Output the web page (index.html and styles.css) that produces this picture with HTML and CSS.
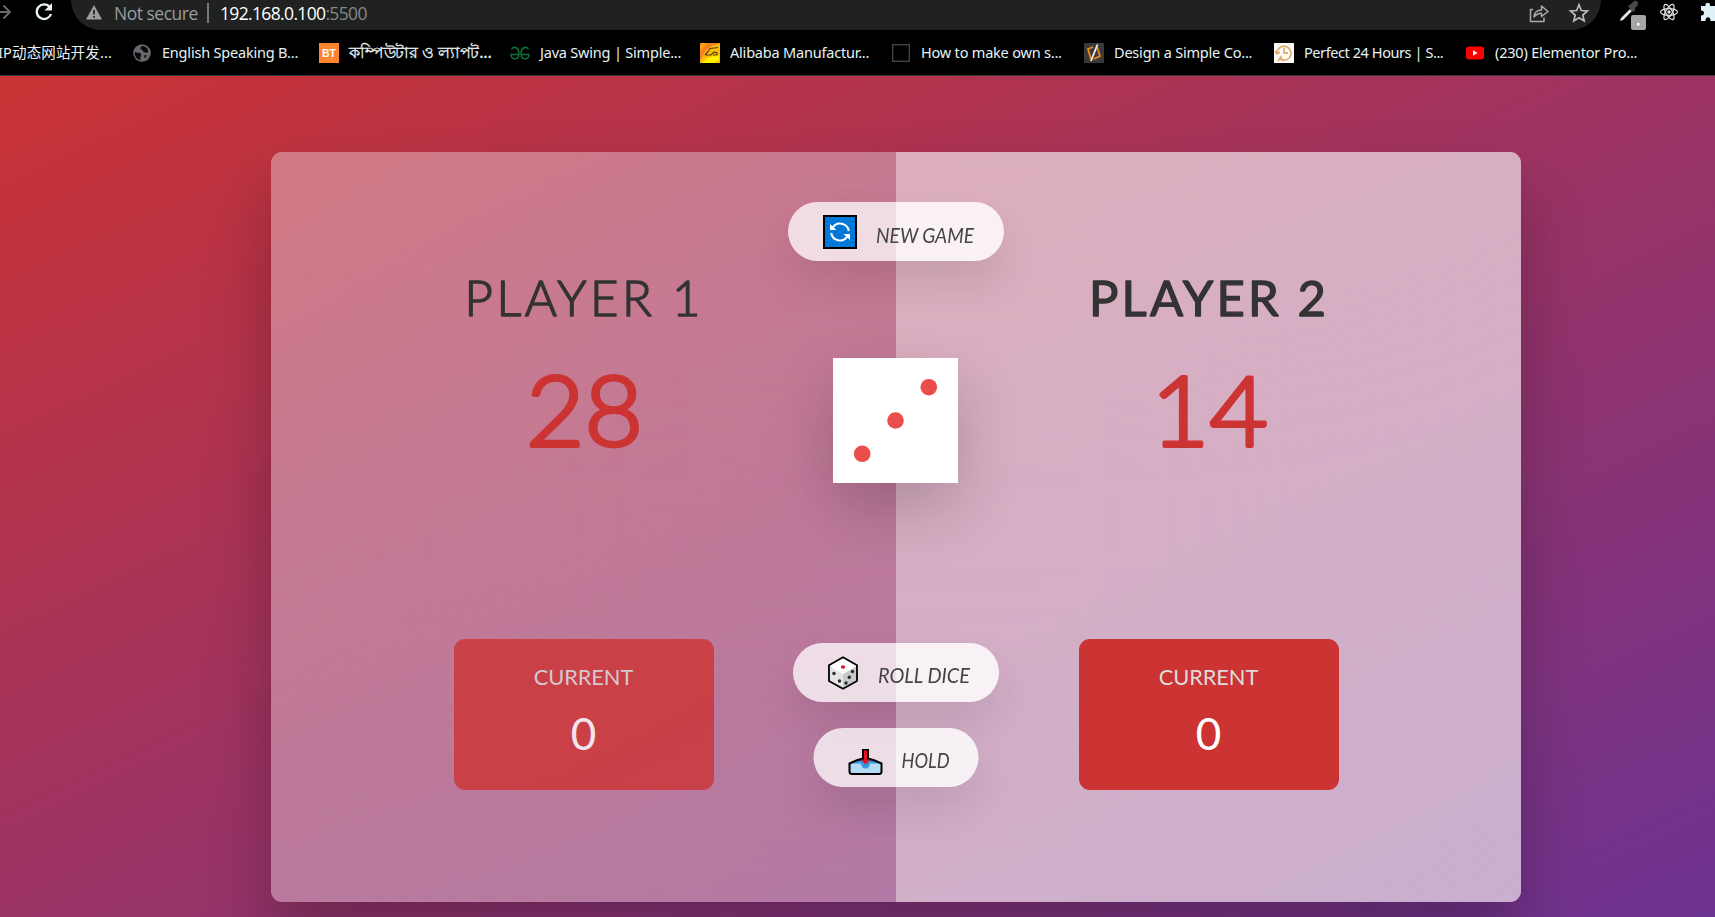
FILE: index.html
```html
<!DOCTYPE html>
<html lang="en">
<head>
<meta charset="utf-8">
<title>Pig Game</title>
<link rel="stylesheet" href="styles.css">
</head>
<body>
<header class="browser">
  <div class="toolbar">
    <svg class="forward" width="14" height="24" viewBox="0 0 14 24"><path d="M0 12H11M4.500 5.500L11 12L4.500 18.500" fill="none" stroke="#6a6b6c" stroke-width="1.800"/></svg>
    <svg class="reload" width="20" height="20" viewBox="0 0 20 20"><path d="M15.800 5.200A7.300 7.300 0 1 0 17 12" fill="none" stroke="#e8f4f6" stroke-width="2.300"/><path d="M18 1V8.500H10.500Z" fill="#e8f4f6"/></svg>
    <div class="address">
      <svg width="16" height="15" viewBox="0 0 16 15"><path d="M8 0L16 14.500H0Z" fill="#9b9da0"/><path d="M8 5V9.500M8 11V12.800" stroke="#202221" stroke-width="1.700"/></svg>
      <span class="insecure">Not secure</span>
      <span class="divider"></span>
      <span class="url">192.168.0.100<span class="port">:5500</span></span>
      <svg class="share" width="20" height="20" viewBox="0 0 20 20"><path d="M4 6.500H1.500V18.500H15V14.500M5 14C5.500 9.500 8 7 12.500 7V3L19 8.500L12.500 13.500V10.200C9 10.200 7 11.500 5 14Z" fill="none" stroke="#a9abac" stroke-width="1.500" stroke-linejoin="round"/></svg>
      <svg class="star" width="20" height="20" viewBox="0 0 20 20"><path d="M10 1.800L12.300 7.500L18.500 8L13.800 12L15.200 18L10 14.800L4.800 18L6.200 12L1.500 8L7.700 7.500Z" fill="none" stroke="#b9bbbc" stroke-width="1.700"/></svg>
    </div>
    <div class="extensions">
      <svg width="28" height="28" viewBox="0 0 28 28"><path d="M2 18L11 9L13 11L4 20L1 21Z" fill="#e4e4e4"/><path d="M9 6L12 4L14 2C17-1 21 2 18 6L16 8L16 11L13 12Z" fill="#48494a"/><rect x="12" y="15" width="15" height="15" rx="2" fill="#a5a5a5"/><rect x="18" y="23" width="2.500" height="2.500" fill="#fff"/></svg>
      <svg class="react" width="20" height="20" viewBox="-10 -10 20 20"><g fill="none" stroke="#e2e2e2" stroke-width="1.200"><ellipse rx="8.500" ry="3.300"/><ellipse rx="8.500" ry="3.300" transform="rotate(60)"/><ellipse rx="8.500" ry="3.300" transform="rotate(120)"/></g><circle r="1.700" fill="#e2e2e2"/></svg>
      <svg class="puzzle" width="16" height="20" viewBox="0 0 16 20"><path d="M1 4H5.500C4.500-.5 11-.5 10 4H16V19H10.500C11 14 5 14 5.500 19H1V13.500C5 14 5 8 1 8.500Z" fill="#dff1f6"/></svg>
    </div>
  </div>
  <nav class="bookmarks">
    <a class="bookmark first"><span class="label">IP动态网站开发...</span></a>
    <a class="bookmark"><svg width="20" height="20" viewBox="0 0 20 20"><circle cx="10" cy="10" r="8.800" fill="#666a6f"/><path d="M3 8.500C5 11 8 8.500 9 11C10 13 7 14 9 17C5 17 2 13 3 8.500ZM10 3C7 5 9 7 11 7C10 9 13 10 16 9.500C17 6 14 3 10 3ZM12 12.500L15 12L13 15.500Z" fill="#08090a"/></svg><span class="label">English Speaking B...</span></a>
    <a class="bookmark"><svg width="20" height="20" viewBox="0 0 20 20"><rect width="20" height="20" fill="#ff842d"/><text x="3" y="14.300" class="bt" textLength="14" lengthAdjust="spacingAndGlyphs">BT</text></svg><span class="label bengali">কম্পিউটার ও ল্যাপট...</span></a>
    <a class="bookmark"><svg width="20" height="20" viewBox="0 0 20 20"><path d="M1.500 5.500C4 1 9 4 9 9.500C9 16.500 1.500 16.500 1 10.500H9M18.500 5.500C16 1 11 4 11 9.500C11 16.500 18.500 16.500 19 10.500H11" transform="translate(0 1)" fill="none" stroke="#0c7339" stroke-width="1.500"/></svg><span class="label">Java Swing | Simple...</span></a>
    <a class="bookmark"><svg width="20" height="20" viewBox="0 0 20 20"><rect width="20" height="20" fill="#ffbd0b"/><path d="M0 0H20L12 3L6 7L0 18Z" fill="#f77e22"/><path d="M1 0L8 0L0 8Z" fill="#ffa30a"/><path d="M6 16L14 12H19V17L14 20H3Z" fill="#fff000"/><path d="M8 8.500L10 5.500L18 4.500M5 12H11L14 9L17 10V12H13M5 12L8 8.500" fill="none" stroke="#514015" stroke-width="1.200"/></svg><span class="label">Alibaba Manufactur...</span></a>
    <a class="bookmark"><svg width="20" height="20" viewBox="0 0 20 20"><rect x="1.700" y="1.700" width="16.600" height="16.600" fill="none" stroke="#484848" stroke-width="1.300"/></svg><span class="label">How to make own s...</span></a>
    <a class="bookmark"><svg width="20" height="20" viewBox="0 0 20 20"><rect width="20" height="20" fill="#393939"/><path d="M9 4L4 6L7 16M10 16L16 13L13 4" fill="none" stroke="#f28a12" stroke-width="1.800"/><path d="M13.500 1.500L7 18" stroke="#eee" stroke-width="1.800"/></svg><span class="label">Design a Simple Co...</span></a>
    <a class="bookmark"><svg width="20" height="20" viewBox="0 0 20 20"><rect width="20" height="20" fill="#fffaf3"/><path d="M3 10A7 7 0 1 1 6 16M1 8L3 11L6 9M10 5V10H14M4 18L7 14L8 17" fill="none" stroke="#dfb077" stroke-width="1.800"/></svg><span class="label tight">Perfect 24 Hours | S...</span></a>
    <a class="bookmark"><svg width="20" height="20" viewBox="0 0 20 20"><rect x="1" y="3.500" width="18" height="13" rx="3" fill="#f00"/><path d="M8 7.200L12.500 10L8 12.800Z" fill="#fff"/></svg><span class="label">(230) Elementor Pro...</span></a>
  </nav>
</header>
<div class="viewport">
  <div class="page">
    <main class="board">
      <section class="player">
        <svg class="name" width="400" height="80"><text x="80.500" y="50.500" textLength="236">PLAYER 1</text></svg>
        <svg class="score" width="400" height="120"><text x="142" y="101" textLength="117" lengthAdjust="spacingAndGlyphs">28</text></svg>
        <div class="current"><p class="current-label">CURRENT</p><p class="current-score">0</p></div>
      </section>
      <section class="player active">
        <svg class="name" width="400" height="80"><text x="80" y="50.500" textLength="237">PLAYER 2</text></svg>
        <svg class="score" width="400" height="120"><text x="142" y="101" textLength="117" lengthAdjust="spacingAndGlyphs">14</text></svg>
        <div class="current"><p class="current-label">CURRENT</p><p class="current-score">0</p></div>
      </section>
      <svg class="dice" width="125" height="125" viewBox="0 0 125 125"><rect width="125" height="125" fill="#fff"/><g fill="#eb4d4b"><circle cx="95.800" cy="29.200" r="8.300"/><circle cx="62.500" cy="62.500" r="8.300"/><circle cx="29.200" cy="95.800" r="8.300"/></g></svg>
      <button class="btn new">
        <svg width="34" height="34" viewBox="0 0 34 34"><rect x="1" y="1" width="32" height="32" fill="#0078d7" stroke="#000" stroke-width="2"/><g fill="none" stroke="#fff" stroke-width="2"><path d="M9.500 13A8.800 8.800 0 0 1 25.800 16"/><path d="M8.200 18A8.800 8.800 0 0 0 24.500 21"/></g><path d="M7 9V15H13.500ZM27 25V19H20.500Z" fill="#fff"/></svg>
        <svg class="caption" width="100" height="34"><text x="1" y="27.500" textLength="98" lengthAdjust="spacingAndGlyphs">NEW GAME</text></svg>
      </button>
      <button class="btn roll">
        <svg width="34" height="34" viewBox="0 0 34 34"><path d="M17 1L31.500 9V25L17 33L2.500 25V9Z" fill="#fff"/><path d="M3 10L17 18V32L3 24Z" fill="#e4e4e4"/><path d="M31 10L17 18V32L31 24Z" fill="#c9c9c9"/><path d="M17 1.300L31 9.300V25L17 32.700L3 25V9.300Z" fill="none" stroke="#000" stroke-width="1.800"/><ellipse cx="17" cy="11" rx="2.200" ry="1.700" fill="#d3192d"/><g fill="#292929"><circle cx="8" cy="17.500" r="1.700"/><circle cx="13.500" cy="25" r="1.700"/><circle cx="26.500" cy="15.500" r="1.700"/><circle cx="23.300" cy="21.300" r="1.700"/><circle cx="20" cy="27" r="1.700"/></g></svg>
        <svg class="caption" width="94" height="34"><text x="0" y="27" textLength="92" lengthAdjust="spacingAndGlyphs">ROLL DICE</text></svg>
      </button>
      <button class="btn hold">
        <svg width="34" height="34" viewBox="0 0 34 34"><path d="M1 22.500L9 19H25L33 22.500V30.500Q33 33 30.500 33H3.500Q1 33 1 30.500Z" fill="#b2dcf4"/><path d="M3 22.500L9 19H25L31 22.500Z" fill="#3a96e0"/><path d="M12.500 22H21.500Q21 27.500 17 27.500T12.500 22Z" fill="#3a96e0"/><path d="M1 22.500L9 19Q17 17 25 19L33 22.500V30.500Q33 33 30.500 33H3.500Q1 33 1 30.500Z" fill="none" stroke="#000" stroke-width="2"/><path d="M13.500 8H20.500V17H23L17 23L11 17H13.500Z" fill="#000"/><path d="M15.500 9.500H18.500V18.500H21.500L17 23.500L12.500 18.500H15.500Z" fill="#e81224"/></svg>
        <svg class="caption" width="50" height="34"><text x="1" y="27" textLength="48" lengthAdjust="spacingAndGlyphs">HOLD</text></svg>
      </button>
    </main>
  </div>
</div>
</body>
</html>
```
FILE: styles.css
```css
* { box-sizing: border-box; margin: 0; padding: 0; }
body { width: 1715px; height: 917px; overflow: hidden; background: #000; font-family: Lato, sans-serif; }
svg { display: block; flex: none; overflow: visible; }

.browser { height: 76px; background: #000; border-bottom: 1px solid #35363a; overflow: hidden; }
.toolbar { height: 30px; display: flex; overflow: hidden; }
.forward { margin: 0 20px 0 -1px; }
.reload { margin: 2px 17px 0 1px; }
.address { flex: none; width: 1530px; height: 60px; margin-top: -30px; padding: 25px 12px 0 15px; border-radius: 30px; background: #202221; display: flex; align-items: center; font: 17.5px/34px "Open Sans", "Noto Sans", sans-serif; color: #9a9c9e; }
.insecure { margin-left: 12px; width: 84px; white-space: nowrap; letter-spacing: -.5px; }
.divider { width: 2px; height: 20px; margin: 0 11px 0 9px; background: #77797a; }
.url { color: #fff; letter-spacing: -.65px; }
.port { color: #85888a; }
.share { margin-left: auto; }
.star { margin-left: 20px; }
.extensions { flex: none; display: flex; margin-left: 18px; }
.react { margin: 2px 0 0 12px; }
.puzzle { margin: 2px 0 0 21px; }

.bookmarks { display: grid; grid-template-columns: 132px 187px 191px 190px 191px 193px 190px 191px 190px; padding-top: 13px; }
.bookmark { display: flex; align-items: center; gap: 10px; height: 20px; }
.first { justify-content: flex-end; padding-right: 20px; }
.first .label { letter-spacing: .15px; }
.label { margin-top: -2px; font: 14.5px/20px "Noto Sans", "Noto Sans CJK SC", sans-serif; letter-spacing: -.2px; color: #e5f3f6; white-space: nowrap; }
.tight { letter-spacing: -.42px; }
.bengali { font-size: 16.2px; -webkit-text-stroke: .3px #e5f3f6; }
.bt { font: bold 11px "Liberation Sans", sans-serif; fill: #fff; }

.viewport { height: 841px; overflow: hidden; }
.page { width: 1920px; height: 902px; margin-left: -64px; display: flex; align-items: center; justify-content: center; background: linear-gradient(to top left, #663399 0%, #cc3333 100%); }
.board { position: relative; width: 1250px; height: 750px; display: flex; border-radius: 11px; overflow: hidden; background: rgba(255,255,255,.35); backdrop-filter: blur(200px); box-shadow: 0 37.5px 62.5px rgba(0,0,0,.25); }
.player { flex: 1; padding: 112.5px; display: flex; flex-direction: column; align-items: center; }
.active { background: rgba(255,255,255,.4); }
.name text { font: 300 49px Lato, sans-serif; fill: #333; stroke: #333; stroke-width: 1.5px; stroke-linejoin: round; }
.active .name text { font-weight: 400; stroke-width: 1.3px; }
.score text { font: 300 96px Lato, sans-serif; fill: #c33; stroke: #c33; stroke-width: 3.8px; stroke-linejoin: round; }
.current { width: 260px; height: 151px; margin-top: auto; padding-top: 24px; border-radius: 11px; background: #c33; opacity: .8; text-align: center; }
.active .current { opacity: 1; }
.current-label { font-size: 21.8px; line-height: 28px; color: #ddd; letter-spacing: -.1px; }
.current-score { margin-top: 14px; font-size: 44px; line-height: 56px; color: #fff; }

.dice { position: absolute; left: 562.4px; top: 206px; box-shadow: 0 25px 62.5px rgba(0,0,0,.2); }
.btn { position: absolute; left: 50%; transform: translateX(-50%); height: 59px; border: 0; border-radius: 60px; background: linear-gradient(90deg, rgba(255,255,255,.75) 50%, rgba(255,255,255,.83) 50%); box-shadow: 0 22px 44px rgba(0,0,0,.1); display: flex; align-items: center; gap: 18px; padding: 0 35px; }
.new { top: 50px; width: 216px; }
.roll { top: 491px; width: 206px; padding-left: 33px; padding-top: 1px; }
.hold { top: 576px; width: 165px; }
.caption text { font: italic 400 22px Lato, sans-serif; fill: #444; }
```
